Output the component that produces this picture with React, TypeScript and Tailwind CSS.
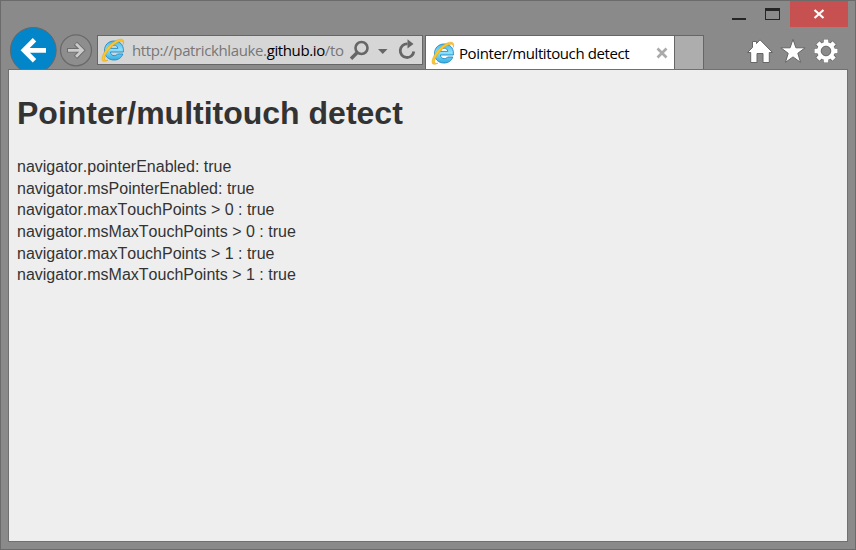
import React from "react";

function IELogo() {
  return (
    <svg width="24" height="24" viewBox="0 0 24 24" className="shrink-0">
      <defs>
        <linearGradient id="ieBlue" x1="0" y1="0" x2="0" y2="1">
          <stop offset="0" stopColor="#49b9e8" />
          <stop offset="0.45" stopColor="#8be0fa" />
          <stop offset="1" stopColor="#35aee3" />
        </linearGradient>
      </defs>
      <path
        d="M22.400 14H9.400c.3 2.300 1.700 3.600 3.900 3.600 1.500 0 2.500-.5 3.200-1.600h5.300c-1.300 3.800-4.300 6-8.800 6-5.700 0-9.500-3.800-9.500-9.400C3.500 6.900 7.500 3 13.100 3c5.700 0 9.300 3.700 9.300 9.200zM9.500 10.400h7.300c-.3-2.100-1.600-3.200-3.600-3.200s-3.300 1.100-3.700 3.200z"
        fill="url(#ieBlue)"
        stroke="#2089c5"
        strokeWidth="0.9"
      />
      <path
        d="M22.300 6.400c.9-3.100.2-5-2-5.200C15.900.9 9.100 5.500 4.700 11.900.9 17.400-.1 22.300 2.500 23.200c1.200.4 2.800-.1 4.500-1-2.300.5-3.500-.1-3.400-1.800.1-2.300 2-5.900 5-9.400 4.100-4.800 9.200-8.200 12-7.800 1.300.2 1.900 1.300 1.700 3.200z"
        fill="#fcc72c"
        stroke="#e2a016"
        strokeWidth="0.5"
      />
    </svg>
  );
}

function BackIcon() {
  return (
    <svg width="48" height="42" viewBox="0 0 48 42" className="shrink-0 self-end">
      <circle cx="24.300" cy="23.300" r="22.900" fill="#0286c9" stroke="#666" />
      <path d="M37 23.300H15.500M25.500 12.800 15 23.300 25.500 33.800" fill="none" stroke="#fff" strokeWidth="4.800" />
    </svg>
  );
}

function ForwardIcon() {
  return (
    <svg width="34" height="34" viewBox="0 0 34 34" className="shrink-0">
      <circle cx="17" cy="17.300" r="15.500" fill="#8e8e8e" stroke="#696969" strokeWidth="1.300" />
      <path d="M8 17.300H23M16.500 10.300l7 7-7 7" fill="none" stroke="#6c6c6c" strokeWidth="4.600" />
      <path d="M9 17.300H23M17 10.800l6.500 6.500-6.500 6.500" fill="none" stroke="#cbcbcb" strokeWidth="2.700" />
    </svg>
  );
}

function WindowButtons() {
  return (
    <div className="flex h-[26px] justify-end pr-[7px]">
      <svg width="110" height="26" viewBox="680 1 110 26">
        <path d="M732 18h14v2h-14z" fill="#252525" />
        <path d="M765 8h15v12h-15zM766 11v8h13v-8z" fill="#252525" fillRule="evenodd" />
      </svg>
      <div className="flex w-[58px] items-center justify-center bg-[#c75050]">
        <svg width="12" height="10" viewBox="0 0 12 10">
          <path d="m1.500 1 9 8m0-8-9 8" stroke="#fff" strokeWidth="2.200" />
        </svg>
      </div>
    </div>
  );
}

function AddressBar() {
  return (
    <div className="mt-[8px] flex h-[30px] w-[326px] shrink-0 items-center border border-[#666] bg-[#d6d6d6] pl-[3px]">
      <IELogo />
      <span className="ml-[7px] w-[213px] shrink-0 whitespace-nowrap font-['Open_Sans',sans-serif] text-[15px] leading-7 tracking-[-0.380px] text-[#777]">
        http://patrickhlauke.<span className="text-black">github.io</span>/to
      </span>
      <svg width="76" height="28" viewBox="345 36 76 28" className="shrink-0">
        <circle cx="361.500" cy="48" r="6" fill="none" stroke="#666" strokeWidth="2.600" />
        <path d="m357.300 52.500-6.300 6.300" stroke="#666" strokeWidth="3.400" />
        <path d="M378 49h9.500l-4.750 5z" fill="#666" />
        <path d="M407.500 43.900a6.800 6.800 0 1 0 6.300 7.600" fill="none" stroke="#666" strokeWidth="2.800" />
        <path d="M407.500 39.300v9.200l6-4.600z" fill="#666" />
      </svg>
    </div>
  );
}

function Toolbar() {
  const teeth = [0, 45, 90, 135, 180, 225, 270, 315];
  return (
    <svg width="100" height="34" viewBox="742 35 100 34" className="mt-[8px] mr-[13px] ml-auto">
      <path
        d="M747.500 52.500 752.500 47.400V41.500h4v2L760 39.800l12.500 12.700h-3.200V62.500h-6.300v-9h-6v9h-6.300v-10z"
        fill="#fff"
        stroke="#666"
      />
      <path
        d="m793 39.300 2.900 8.500h9.200l-7.300 5.500 2.800 9.100-7.600-5.500-7.600 5.500 2.800-9.100-7.300-5.500h9.200z"
        fill="#fff"
        stroke="#666"
      />
      <g stroke="#666" fill="#666">
        {teeth.map((a) => (
          <path key={a} d="M823.500 45v-5.500h5v5.500z" transform={`rotate(${a} 826 51)`} />
        ))}
        <circle cx="826" cy="51" r="9" />
      </g>
      <g fill="#fff">
        {teeth.map((a) => (
          <path key={a} d="M823.700 45v-5.500h4.600V45z" transform={`rotate(${a} 826 51)`} />
        ))}
        <circle cx="826" cy="51" r="8.900" />
      </g>
      <circle cx="826" cy="51" r="4.800" fill="#8a8a8a" stroke="#666" />
    </svg>
  );
}

const lines = [
  "navigator.pointerEnabled: true",
  "navigator.msPointerEnabled: true",
  "navigator.maxTouchPoints > 0 : true",
  "navigator.msMaxTouchPoints > 0 : true",
  "navigator.maxTouchPoints > 1 : true",
  "navigator.msMaxTouchPoints > 1 : true",
];

export default function App() {
  return (
    <div className="flex h-[550px] w-[856px] flex-col overflow-hidden border border-[#6b6b6b] bg-[#8a8a8a]">
      <WindowButtons />
      <div className="flex h-[42px] shrink-0 pl-[8px]">
        <BackIcon />
        <div className="mr-[4px] ml-[2px] flex w-[34px] shrink-0 pt-[6px]">
          <ForwardIcon />
        </div>
        <AddressBar />
        <div className="mt-[8px] ml-[2px] flex h-[34px] w-[250px] shrink-0 items-center border border-b-0 border-[#666] bg-white pl-[5px]">
          <IELogo />
          <span className="ml-[4px] whitespace-nowrap font-['Open_Sans',sans-serif] text-[15px] leading-8 tracking-[-0.400px] text-black">
            Pointer/multitouch detect
          </span>
          <svg width="12" height="12" viewBox="0 0 12 12" className="mr-[6px] ml-auto shrink-0">
            <path d="m1.500 1.500 9 9m0-9-9 9" stroke="#aaa" strokeWidth="2.700" />
          </svg>
        </div>
        <div className="mt-[8px] h-[34px] w-[29px] shrink-0 border-t border-r border-[#666] bg-[#adadad]" />
        <Toolbar />
      </div>
      <main className="mx-[7px] mb-[7px] flex-1 border border-[#707070] bg-[#eee] px-2 font-['Liberation_Sans',Arial,sans-serif] text-[#333]">
        <h1 className="mt-[22px] text-[32px] leading-[43px] font-bold">Pointer/multitouch detect</h1>
        <div className="mt-[21.300px] text-base leading-[21.600px] [font-kerning:none]">
          {lines.map((line) => (
            <p key={line}>{line}</p>
          ))}
        </div>
      </main>
    </div>
  );
}
